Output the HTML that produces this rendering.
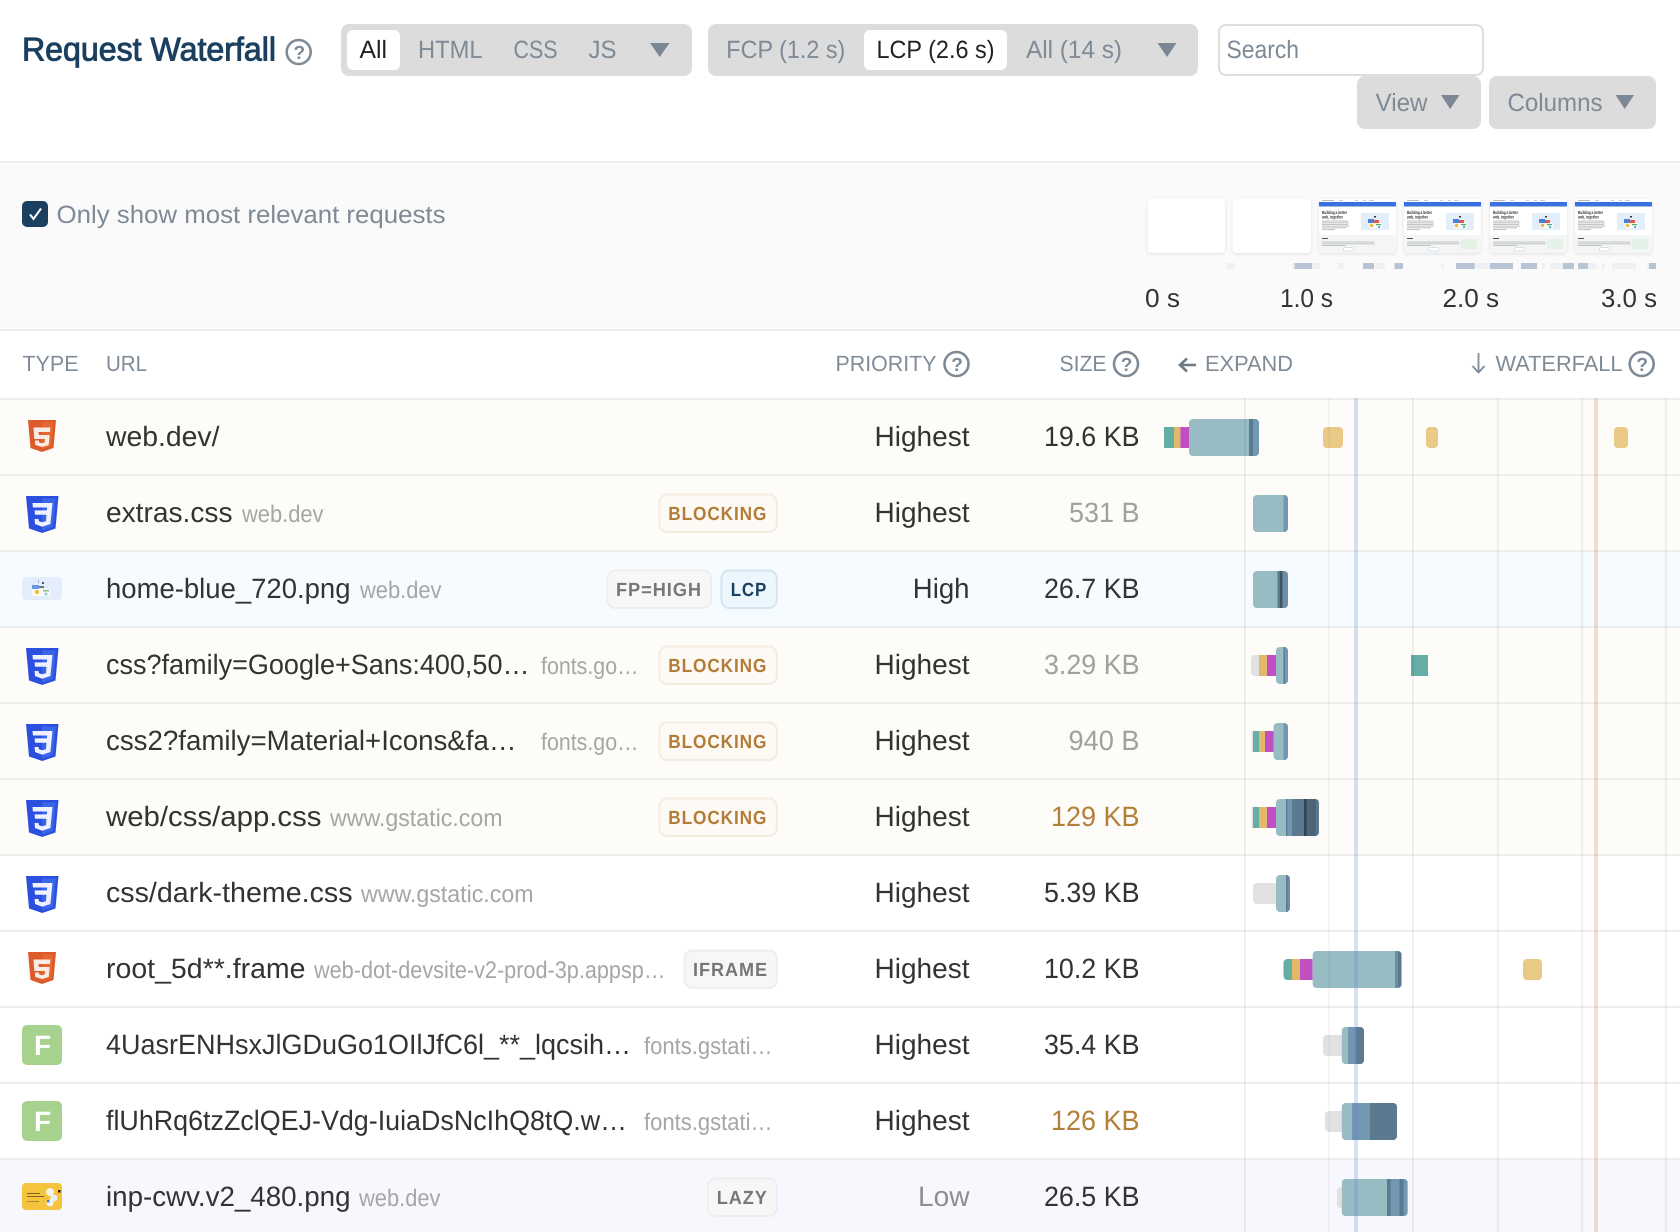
<!DOCTYPE html>
<html lang="en"><head><meta charset="utf-8"><title>Request Waterfall</title>
<style>
html,body{margin:0;padding:0;background:#fff;width:1680px;height:1232px;overflow:hidden}
svg{display:block;font-family:"Liberation Sans",sans-serif;text-rendering:geometricPrecision}
.t{font-size:28px;fill:#333}
.d{font-size:24px;fill:#a6a6a6}
.lt{fill:#a0a0a0}
.or{fill:#b3803a}
.g{font-size:25px;fill:#7e8a96}
.h{font-size:22px;fill:#7f8b97}
.b{font-size:19px;font-weight:700;letter-spacing:1px}
.help{fill:none;stroke:#7e8b97;stroke-width:2.6}
.q{font-size:19px;font-weight:700;fill:#7e8b97}
.tt{font-size:4.6px;font-weight:700;fill:#333}
</style></head><body>
<svg width="1680" height="1232" viewBox="0 0 1680 1232" xmlns="http://www.w3.org/2000/svg">
<defs>
<g id="film">
<rect width="77" height="54" rx="4" fill="#fff"/>
<rect x="3" y="1" width="12" height="1" fill="#bbb"/><rect x="20" y="1" width="4" height="1" fill="#ccc"/><rect x="36" y="1" width="3" height="1" fill="#ccc"/><rect x="44" y="1" width="3" height="1" fill="#ccc"/><rect x="50" y="1" width="5" height="1" fill="#ccc"/>
<rect y="3" width="77" height="4.500" fill="#3a6fe0"/>
<g fill="#c4c4c4"><rect x="3" y="21.500" width="26" height="1.100"/><rect x="3" y="23.200" width="27" height="1.100"/><rect x="3" y="24.900" width="26" height="1.100"/><rect x="3" y="26.600" width="27" height="1.100"/><rect x="3" y="28.300" width="24" height="1.100"/><rect x="3" y="30" width="13" height="1.100"/></g>
<rect x="42" y="14" width="28" height="17" fill="#e3eefb"/>
<rect x="49" y="20" width="6" height="4" fill="#4a7fe0"/><rect x="55" y="21" width="5" height="3" fill="#e05a4a"/><rect x="50" y="24" width="13" height="5.500" fill="#fbfbf6"/><circle cx="52.500" cy="26.500" r="1.700" fill="#f0b93a"/><rect x="57" y="25" width="5" height="1.200" fill="#4cb070"/><circle cx="60" cy="28" r="1.200" fill="#5ab0c8"/><rect x="55" y="17" width="2" height="1.500" fill="#333"/>
<path d="M0 36H77V50a4 4 0 0 1-4 4H4a4 4 0 0 1-4-4Z" fill="#f3f6f4"/>
<g fill="#c0c4c2"><rect x="3" y="42.500" width="52" height="1"/><rect x="3" y="44.300" width="53" height="1"/><rect x="3" y="46" width="24" height="1"/></g>
<rect x="3" y="39" width="6" height="1" fill="#555"/>
<rect x="24.500" y="48.500" width="10" height="3.500" rx="1.500" fill="#fff" stroke="#b6c9e4" stroke-width=".5"/>
</g>
<filter id="sh" x="-10%" y="-10%" width="120%" height="125%"><feDropShadow dx="0" dy="1" stdDeviation="1.500" flood-color="#000" flood-opacity=".1"/></filter>
<g id="css"><path d="M0 0H32.500L29.500 32.500L16.200 37L3 32.500Z" fill="#2b4fdf"/><path d="M16.200 2.500H29.600L27 31L16.200 34.500Z" fill="#3b65ea"/><path d="M6.500 7H26.500L24.400 28L16.200 30.700L9 28L8.600 23H12.600L12.900 25.300L16.200 26.300L20 25.300L20.500 18.800H9L8.600 14.400H20.900L21.200 11.500H6.900Z" fill="#eef1fc"/></g>
<g id="htm"><path d="M0 0H28L25.500 28L14 32L2.500 28Z" fill="#dd5a2b"/><path d="M14 2.500H25.200L23.200 26L14 29Z" fill="#e8682f"/><path d="M5.500 7.500H22.500L22 12H10.500L10.800 15H21.700L20.700 25L14 27L7.300 25L6.900 20.500H11L11.200 22.500L14 23.300L16.800 22.500L17.100 19H6.300Z" fill="#f8ece6"/></g>
<clipPath id="c0"><rect x="1189" y="419" width="70" height="37" rx="4"/></clipPath>
<clipPath id="c1"><rect x="1253" y="495" width="35" height="37" rx="4"/></clipPath>
<clipPath id="c2"><rect x="1253" y="571" width="35" height="37" rx="4"/></clipPath>
<clipPath id="c3"><rect x="1276" y="647" width="12" height="37" rx="4"/></clipPath>
<clipPath id="c4"><rect x="1273.500" y="723" width="14.500" height="37" rx="4"/></clipPath>
<clipPath id="c5"><rect x="1276" y="799" width="43" height="37" rx="4"/></clipPath>
<clipPath id="c6"><rect x="1276" y="875" width="14" height="37" rx="4"/></clipPath>
<clipPath id="c7"><rect x="1312.600" y="951" width="89" height="37" rx="4"/></clipPath>
<clipPath id="c8"><rect x="1341.700" y="1027" width="22.300" height="37" rx="4"/></clipPath>
<clipPath id="c9"><rect x="1341.700" y="1103" width="55.300" height="37" rx="4"/></clipPath>
<clipPath id="c10"><rect x="1341.700" y="1179" width="66" height="37" rx="4"/></clipPath>
</defs>

<rect width="1680" height="1232" fill="#fff"/>

<!-- Header -->
<text x="22" y="60.500" font-size="33" fill="#1b3f5f" stroke="#1b3f5f" stroke-width=".95" textLength="254" lengthAdjust="spacingAndGlyphs">Request Waterfall</text>
<circle class="help" cx="298.700" cy="52" r="12"/><text class="q" x="293.500" y="59">?</text>

<rect x="341" y="24" width="351" height="52" rx="8" fill="#dcdcdc"/>
<rect x="347" y="30" width="53" height="40" rx="6" fill="#fff"/>
<text x="359.500" y="58" font-size="25" fill="#222" textLength="27.500" lengthAdjust="spacingAndGlyphs">All</text>
<text class="g" x="418" y="58" textLength="64.500" lengthAdjust="spacingAndGlyphs">HTML</text>
<text class="g" x="513.500" y="58" textLength="44" lengthAdjust="spacingAndGlyphs">CSS</text>
<text class="g" x="588.500" y="58" textLength="28" lengthAdjust="spacingAndGlyphs">JS</text>
<path d="M650 43H669.500L659.700 57Z" fill="#7b8894"/>

<rect x="708" y="24" width="490" height="52" rx="8" fill="#dcdcdc"/>
<rect x="864" y="30" width="143" height="40" rx="6" fill="#fff"/>
<text class="g" x="726.300" y="58" textLength="119" lengthAdjust="spacingAndGlyphs">FCP (1.2 s)</text>
<text x="876.500" y="58" font-size="25" fill="#222" textLength="118" lengthAdjust="spacingAndGlyphs">LCP (2.6 s)</text>
<text class="g" x="1026" y="58" textLength="96" lengthAdjust="spacingAndGlyphs">All (14 s)</text>
<path d="M1157.500 43H1176.500L1167 57Z" fill="#7b8894"/>

<rect x="1219" y="25" width="264" height="50" rx="7" fill="#fff" stroke="#dedede" stroke-width="2"/>
<text class="g" x="1226.500" y="58" textLength="72.500" lengthAdjust="spacingAndGlyphs">Search</text>

<rect x="1357" y="76" width="124" height="53" rx="8" fill="#dcdcdc"/>
<text class="g" x="1375.500" y="111" textLength="52" lengthAdjust="spacingAndGlyphs">View</text>
<path d="M1441 95H1459.500L1450.200 109Z" fill="#7b8894"/>
<rect x="1489" y="76" width="167" height="53" rx="8" fill="#dcdcdc"/>
<text class="g" x="1507.500" y="111" textLength="95" lengthAdjust="spacingAndGlyphs">Columns</text>
<path d="M1615.500 95H1634L1624.700 109Z" fill="#7b8894"/>

<!-- Band -->
<rect y="161" width="1680" height="170" fill="#fafafa"/>
<rect y="161" width="1680" height="2" fill="#eeeeee"/>
<rect y="329" width="1680" height="2" fill="#eeeeee"/>
<rect x="22" y="201" width="26" height="26" rx="5" fill="#1b3f5f"/>
<path d="M30 214.500L33.500 219L41 208.500" fill="none" stroke="#fff" stroke-width="2"/>
<text class="g" x="56.500" y="223" textLength="389" lengthAdjust="spacingAndGlyphs">Only show most relevant requests</text>

<!-- Filmstrip -->
<rect x="1147.500" y="198.500" width="77.500" height="54.500" rx="4" fill="#fff" filter="url(#sh)"/>
<rect x="1232.500" y="198.500" width="78.500" height="54.500" rx="4" fill="#fff" filter="url(#sh)"/>
<g transform="translate(1319 199)" filter="url(#sh)"><use href="#film"/><text class="tt" x="3" y="15" textLength="25" lengthAdjust="spacingAndGlyphs">Building a better</text><text class="tt" x="3" y="19.500" textLength="21" lengthAdjust="spacingAndGlyphs">web, together</text></g>
<g transform="translate(1404 199)" filter="url(#sh)"><use href="#film"/><text class="tt" x="3" y="15" textLength="25" lengthAdjust="spacingAndGlyphs">Building a better</text><text class="tt" x="3" y="19.500" textLength="21" lengthAdjust="spacingAndGlyphs">web, together</text><rect x="57" y="40" width="16" height="10" rx="1" fill="#e3f1e6"/></g>
<g transform="translate(1490 199)" filter="url(#sh)"><use href="#film"/><text class="tt" x="3" y="15" textLength="25" lengthAdjust="spacingAndGlyphs">Building a better</text><text class="tt" x="3" y="19.500" textLength="21" lengthAdjust="spacingAndGlyphs">web, together</text><rect x="57" y="40" width="16" height="10" rx="1" fill="#e3f1e6"/></g>
<g transform="translate(1575 199)" filter="url(#sh)"><use href="#film"/><text class="tt" x="3" y="15" textLength="25" lengthAdjust="spacingAndGlyphs">Building a better</text><text class="tt" x="3" y="19.500" textLength="21" lengthAdjust="spacingAndGlyphs">web, together</text><rect x="57" y="40" width="16" height="10" rx="1" fill="#e3f1e6"/></g>

<g fill="#eef0f2">
<rect x="1226.500" y="263" width="8.500" height="6"/><rect x="1292" y="263" width="28.500" height="6"/><rect x="1338" y="263" width="5.600" height="6"/><rect x="1375" y="263" width="10" height="6"/><rect x="1441.500" y="263" width="2" height="6"/><rect x="1474.500" y="263" width="16" height="6"/><rect x="1542" y="263" width="3" height="6"/><rect x="1550" y="263" width="13" height="6"/><rect x="1588" y="263" width="8.500" height="6"/><rect x="1602" y="263" width="2.600" height="6"/><rect x="1612" y="263" width="24" height="6"/><rect x="1647" y="263" width="2" height="6"/>
</g>
<g fill="#b6c4d4">
<rect x="1294.500" y="263" width="17.500" height="6"/><rect x="1363" y="263" width="11" height="6"/><rect x="1394.500" y="263" width="8.500" height="6"/><rect x="1456" y="263" width="18.500" height="6"/><rect x="1490" y="263" width="23" height="6"/><rect x="1521" y="263" width="16" height="6"/><rect x="1563" y="263" width="11" height="6"/><rect x="1578" y="263" width="10" height="6"/><rect x="1649" y="263" width="7" height="6"/>
</g>
<g font-size="26" fill="#333">
<text x="1145" y="307" textLength="35" lengthAdjust="spacingAndGlyphs">0 s</text>
<text x="1280" y="307" textLength="53" lengthAdjust="spacingAndGlyphs">1.0 s</text>
<text x="1442.500" y="307" textLength="56.500" lengthAdjust="spacingAndGlyphs">2.0 s</text>
<text x="1601" y="307" textLength="56" lengthAdjust="spacingAndGlyphs">3.0 s</text>
</g>

<!-- Table head -->
<text class="h" x="22.500" y="371" textLength="56" lengthAdjust="spacingAndGlyphs">TYPE</text>
<text class="h" x="106" y="371" textLength="41" lengthAdjust="spacingAndGlyphs">URL</text>
<text class="h" x="835.500" y="371" textLength="101" lengthAdjust="spacingAndGlyphs">PRIORITY</text>
<circle class="help" cx="956.500" cy="364" r="12"/><text class="q" x="951.200" y="371">?</text>
<text class="h" x="1059.500" y="371" textLength="47" lengthAdjust="spacingAndGlyphs">SIZE</text>
<circle class="help" cx="1126" cy="364" r="12"/><text class="q" x="1120.700" y="371">?</text>
<path d="M1196 365H1180M1187 358.500L1180 365L1187 371.500" fill="none" stroke="#6f7a85" stroke-width="2.600"/>
<text class="h" x="1205" y="371" textLength="88" lengthAdjust="spacingAndGlyphs">EXPAND</text>
<path d="M1478.500 353V372M1472.500 366L1478.500 372.500L1484.500 366" fill="none" stroke="#7f8b97" stroke-width="1.800"/>
<text class="h" x="1495.500" y="371" textLength="127" lengthAdjust="spacingAndGlyphs">WATERFALL</text>
<circle class="help" cx="1641.700" cy="364" r="12"/><text class="q" x="1636.400" y="371">?</text>

<!-- Row backgrounds -->
<rect y="398" width="1680" height="228" fill="#fdfcf8"/>
<rect y="552" width="1680" height="74" fill="#f6fbff"/>
<rect y="626" width="1680" height="229" fill="#fdfcf8"/>
<rect y="1160" width="1680" height="72" fill="#f6f8fe"/>
<g fill="#eeeeee">
<rect y="398" width="1680" height="2"/><rect y="474" width="1680" height="2"/><rect y="550" width="1680" height="2"/><rect y="626" width="1680" height="2"/><rect y="702" width="1680" height="2"/><rect y="778" width="1680" height="2"/><rect y="854" width="1680" height="2"/><rect y="930" width="1680" height="2"/><rect y="1006" width="1680" height="2"/><rect y="1082" width="1680" height="2"/><rect y="1158" width="1680" height="2"/>
</g>

<!-- Type icons -->
<use href="#htm" x="28" y="420"/>
<use href="#css" x="26" y="496"/>
<g transform="translate(22 577)"><rect width="40" height="23" rx="4" fill="#e4edfb"/><rect x="10" y="8" width="7" height="4" fill="#4a7fe0" fill-opacity=".8"/><rect x="17" y="9" width="5" height="2" fill="#777"/><rect x="10" y="12" width="18" height="7" fill="#fbfbf6"/><circle cx="15" cy="15" r="2" fill="#f0b93a"/><rect x="21" y="13" width="6" height="1.500" fill="#7cc090"/><circle cx="24" cy="17" r="1.500" fill="#8ac8d8"/><rect x="16" y="3" width="1" height="3" fill="#9fb0e0"/><rect x="20" y="5" width="2" height="2" fill="#555"/></g>
<use href="#css" x="26" y="648"/>
<use href="#css" x="26" y="724"/>
<use href="#css" x="26" y="800"/>
<use href="#css" x="26" y="876"/>
<use href="#htm" x="28" y="952"/>
<rect x="22" y="1025" width="40" height="40" rx="5" fill="#a6d28e"/><text x="34" y="1055" font-size="28" font-weight="700" fill="#fff">F</text>
<rect x="22" y="1101" width="40" height="40" rx="5" fill="#a6d28e"/><text x="34" y="1131" font-size="28" font-weight="700" fill="#fff">F</text>
<g transform="translate(22 1183)"><rect width="40" height="27" rx="4" fill="#f6c33c"/><rect x="5" y="10" width="13" height="1" fill="#7a6420"/><rect x="5" y="13" width="17" height="1" fill="#7a6420"/><rect x="5" y="18" width="12" height=".8" fill="#9a8030"/><circle cx="28" cy="9" r="4" fill="#f4f2ea"/><circle cx="32" cy="15" r="3.500" fill="#e6eef8"/><circle cx="28" cy="20" r="3.500" fill="#f4f2ea"/><rect x="36" y="7" width="2.500" height="2.500" fill="#222"/><rect x="25" y="17" width="2.500" height="2.500" fill="#4a7fe0"/></g>

<!-- URLs -->
<text class="t" x="106" y="446" textLength="113.500" lengthAdjust="spacingAndGlyphs">web.dev/</text>

<text class="t" x="106" y="522" textLength="126.500" lengthAdjust="spacingAndGlyphs">extras.css</text>
<text class="d" x="242" y="522" textLength="81.500" lengthAdjust="spacingAndGlyphs">web.dev</text>

<text class="t" x="106" y="598" textLength="244.500" lengthAdjust="spacingAndGlyphs">home-blue_720.png</text>
<text class="d" x="360" y="598" textLength="81.500" lengthAdjust="spacingAndGlyphs">web.dev</text>

<text class="t" x="106" y="674" textLength="423.500" lengthAdjust="spacingAndGlyphs">css?family=Google+Sans:400,50…</text>
<text class="d" x="541" y="674" textLength="97.500" lengthAdjust="spacingAndGlyphs">fonts.go…</text>

<text class="t" x="106" y="750" textLength="410.500" lengthAdjust="spacingAndGlyphs">css2?family=Material+Icons&amp;fa…</text>
<text class="d" x="541" y="750" textLength="97.500" lengthAdjust="spacingAndGlyphs">fonts.go…</text>

<text class="t" x="106" y="826" textLength="215.500" lengthAdjust="spacingAndGlyphs">web/css/app.css</text>
<text class="d" x="330" y="826" textLength="172.500" lengthAdjust="spacingAndGlyphs">www.gstatic.com</text>

<text class="t" x="106" y="902" textLength="246.500" lengthAdjust="spacingAndGlyphs">css/dark-theme.css</text>
<text class="d" x="361" y="902" textLength="172.500" lengthAdjust="spacingAndGlyphs">www.gstatic.com</text>

<text class="t" x="106" y="978" textLength="199.500" lengthAdjust="spacingAndGlyphs">root_5d**.frame</text>
<text class="d" x="314" y="978" textLength="351.500" lengthAdjust="spacingAndGlyphs">web-dot-devsite-v2-prod-3p.appsp…</text>

<text class="t" x="106" y="1054" textLength="525" lengthAdjust="spacingAndGlyphs">4UasrENHsxJlGDuGo1OIlJfC6l_**_lqcsih…</text>
<text class="d" x="644" y="1054" textLength="128.500" lengthAdjust="spacingAndGlyphs">fonts.gstati…</text>

<text class="t" x="106" y="1130" textLength="521" lengthAdjust="spacingAndGlyphs">flUhRq6tzZclQEJ-Vdg-IuiaDsNcIhQ8tQ.w…</text>
<text class="d" x="644" y="1130" textLength="128.500" lengthAdjust="spacingAndGlyphs">fonts.gstati…</text>

<text class="t" x="106" y="1206" textLength="244.500" lengthAdjust="spacingAndGlyphs">inp-cwv.v2_480.png</text>
<text class="d" x="359" y="1206" textLength="81.500" lengthAdjust="spacingAndGlyphs">web.dev</text>

<!-- Badges -->
<g stroke-width="2">
<rect x="659.400" y="494.500" width="117.400" height="37.500" rx="8" fill="#fdf9f4" stroke="#f5ebdf"/>
<rect x="607.300" y="570.500" width="103.700" height="37.500" rx="8" fill="#f7f7f7" stroke="#eeeeee"/>
<rect x="721.400" y="570.500" width="55.400" height="37.500" rx="8" fill="#ecf6fd" stroke="#d5e5f0"/>
<rect x="659.400" y="646.500" width="117.400" height="37.500" rx="8" fill="#fdf9f4" stroke="#f5ebdf"/>
<rect x="659.400" y="722.500" width="117.400" height="37.500" rx="8" fill="#fdf9f4" stroke="#f5ebdf"/>
<rect x="659.400" y="798.500" width="117.400" height="37.500" rx="8" fill="#fdf9f4" stroke="#f5ebdf"/>
<rect x="684.600" y="950.500" width="92.200" height="37.500" rx="8" fill="#f7f7f7" stroke="#eeeeee"/>
<rect x="708" y="1178.500" width="68.800" height="37.500" rx="8" fill="#f7f7f7" stroke="#eeeeee"/>
</g>
<g class="b">
<text x="668.300" y="520" fill="#b27c38" textLength="99" lengthAdjust="spacingAndGlyphs">BLOCKING</text>
<text x="616" y="596" fill="#777" textLength="86" lengthAdjust="spacingAndGlyphs">FP=HIGH</text>
<text x="730.700" y="596" fill="#1b3f5f" textLength="36.500" lengthAdjust="spacingAndGlyphs">LCP</text>
<text x="668.300" y="672" fill="#b27c38" textLength="99" lengthAdjust="spacingAndGlyphs">BLOCKING</text>
<text x="668.300" y="748" fill="#b27c38" textLength="99" lengthAdjust="spacingAndGlyphs">BLOCKING</text>
<text x="668.300" y="824" fill="#b27c38" textLength="99" lengthAdjust="spacingAndGlyphs">BLOCKING</text>
<text x="693" y="976" fill="#777" textLength="75" lengthAdjust="spacingAndGlyphs">IFRAME</text>
<text x="716.800" y="1204" fill="#777" textLength="51" lengthAdjust="spacingAndGlyphs">LAZY</text>
</g>

<!-- Priority -->
<text class="t" x="874.500" y="446" textLength="95" lengthAdjust="spacingAndGlyphs">Highest</text>
<text class="t" x="874.500" y="522" textLength="95" lengthAdjust="spacingAndGlyphs">Highest</text>
<text class="t" x="912.800" y="598" textLength="56.700" lengthAdjust="spacingAndGlyphs">High</text>
<text class="t" x="874.500" y="674" textLength="95" lengthAdjust="spacingAndGlyphs">Highest</text>
<text class="t" x="874.500" y="750" textLength="95" lengthAdjust="spacingAndGlyphs">Highest</text>
<text class="t" x="874.500" y="826" textLength="95" lengthAdjust="spacingAndGlyphs">Highest</text>
<text class="t" x="874.500" y="902" textLength="95" lengthAdjust="spacingAndGlyphs">Highest</text>
<text class="t" x="874.500" y="978" textLength="95" lengthAdjust="spacingAndGlyphs">Highest</text>
<text class="t" x="874.500" y="1054" textLength="95" lengthAdjust="spacingAndGlyphs">Highest</text>
<text class="t" x="874.500" y="1130" textLength="95" lengthAdjust="spacingAndGlyphs">Highest</text>
<text class="t lt" x="918" y="1206" textLength="51.500" lengthAdjust="spacingAndGlyphs" style="fill:#8e8e8e">Low</text>

<!-- Size -->
<text class="t" x="1044" y="446" textLength="95.500" lengthAdjust="spacingAndGlyphs">19.6 KB</text>
<text class="t lt" x="1069" y="522" textLength="70.500" lengthAdjust="spacingAndGlyphs">531 B</text>
<text class="t" x="1044" y="598" textLength="95.500" lengthAdjust="spacingAndGlyphs">26.7 KB</text>
<text class="t lt" x="1044" y="674" textLength="95.500" lengthAdjust="spacingAndGlyphs">3.29 KB</text>
<text class="t lt" x="1068.500" y="750" textLength="71" lengthAdjust="spacingAndGlyphs">940 B</text>
<text class="t or" x="1051" y="826" textLength="88.500" lengthAdjust="spacingAndGlyphs">129 KB</text>
<text class="t" x="1044" y="902" textLength="95.500" lengthAdjust="spacingAndGlyphs">5.39 KB</text>
<text class="t" x="1044" y="978" textLength="95.500" lengthAdjust="spacingAndGlyphs">10.2 KB</text>
<text class="t" x="1044" y="1054" textLength="95.500" lengthAdjust="spacingAndGlyphs">35.4 KB</text>
<text class="t or" x="1051" y="1130" textLength="88.500" lengthAdjust="spacingAndGlyphs">126 KB</text>
<text class="t" x="1044" y="1206" textLength="95.500" lengthAdjust="spacingAndGlyphs">26.5 KB</text>

<!-- Bars -->
<!-- row 0 -->
<rect x="1164" y="427" width="10" height="21" fill="#65aea5"/><rect x="1174" y="427" width="6.400" height="21" fill="#e2b96b"/><rect x="1180.400" y="427" width="9" height="21" fill="#c050c2"/>
<g clip-path="url(#c0)"><rect x="1189" y="419" width="70" height="37" fill="#97bcc3"/><rect x="1249" y="419" width="4" height="37" fill="#5c7a8f"/><rect x="1253" y="419" width="6" height="37" fill="#7297b0"/></g>
<rect x="1323" y="427" width="20" height="21" rx="4" fill="#e9c986"/><rect x="1426" y="427" width="12" height="21" rx="4" fill="#e9c986"/><rect x="1614" y="427" width="14" height="21" rx="4" fill="#e9c986"/>
<!-- row 1 -->
<g clip-path="url(#c1)"><rect x="1253" y="495" width="35" height="37" fill="#97bcc3"/><rect x="1283.500" y="495" width="4.500" height="37" fill="#7297b0"/></g>
<!-- row 2 -->
<g clip-path="url(#c2)"><rect x="1253" y="571" width="35" height="37" fill="#97bcc3"/><rect x="1277.500" y="571" width="2.500" height="37" fill="#5c7a8f"/><rect x="1280" y="571" width="2.500" height="37" fill="#3f5565"/><rect x="1282.500" y="571" width="5.500" height="37" fill="#6c8ea8"/></g>
<!-- row 3 -->
<path d="M1255 655H1259V676H1255a4 4 0 0 1-4-4V659a4 4 0 0 1 4-4Z" fill="#e1e1e1"/><rect x="1259" y="655" width="8" height="21" fill="#e2b96b"/><rect x="1267" y="655" width="9" height="21" fill="#c050c2"/>
<g clip-path="url(#c3)"><rect x="1276" y="647" width="12" height="37" fill="#97bcc3"/><rect x="1283.500" y="647" width="1.700" height="37" fill="#5c7a8f"/><rect x="1285.200" y="647" width="2.800" height="37" fill="#7297b0"/></g>
<rect x="1411" y="655" width="17" height="21" fill="#65aea5"/>
<!-- row 4 -->
<rect x="1251.500" y="731" width="2" height="21" fill="#e1e1e1"/><rect x="1253" y="731" width="6" height="21" fill="#65aea5"/><rect x="1259" y="731" width="6" height="21" fill="#e2b96b"/><rect x="1265" y="731" width="8.500" height="21" fill="#c050c2"/>
<g clip-path="url(#c4)"><rect x="1273.500" y="723" width="14.500" height="37" fill="#97bcc3"/><rect x="1283.500" y="723" width="4.500" height="37" fill="#7297b0"/></g>
<!-- row 5 -->
<rect x="1251.500" y="807" width="2" height="21" fill="#e1e1e1"/><rect x="1253" y="807" width="6" height="21" fill="#65aea5"/><rect x="1259" y="807" width="8" height="21" fill="#e2b96b"/><rect x="1267" y="807" width="9" height="21" fill="#c050c2"/>
<g clip-path="url(#c5)"><rect x="1276" y="799" width="43" height="37" fill="#97bcc3"/><rect x="1286" y="799" width="6" height="37" fill="#7297b0"/><rect x="1286" y="799" width="1.300" height="37" fill="#5c7a8f"/><rect x="1292" y="799" width="12" height="37" fill="#5c7a8f"/><rect x="1304" y="799" width="2.500" height="37" fill="#2f4352"/><rect x="1306.500" y="799" width="9.500" height="37" fill="#4c6578"/><rect x="1316" y="799" width="3" height="37" fill="#5c7a8f"/></g>
<!-- row 6 -->
<path d="M1257 883H1276V904H1257a4 4 0 0 1-4-4V887a4 4 0 0 1 4-4Z" fill="#e1e1e1"/>
<g clip-path="url(#c6)"><rect x="1276" y="875" width="14" height="37" fill="#97bcc3"/><rect x="1286" y="875" width="1.500" height="37" fill="#5c7a8f"/><rect x="1287.500" y="875" width="2.500" height="37" fill="#6c8ea8"/></g>
<!-- row 7 -->
<path d="M1287.500 959H1292V980H1287.500a4 4 0 0 1-4-4V963a4 4 0 0 1 4-4Z" fill="#65aea5"/><rect x="1292" y="959" width="8" height="21" fill="#e2b96b"/><rect x="1300" y="959" width="12.600" height="21" fill="#c050c2"/>
<g clip-path="url(#c7)"><rect x="1312.600" y="951" width="89" height="37" fill="#97bcc3"/><rect x="1395" y="951" width="3" height="37" fill="#6c8ea8"/><rect x="1398" y="951" width="3.600" height="37" fill="#5c7a8f"/></g>
<rect x="1523" y="959" width="19" height="21" rx="4" fill="#e9c986"/>
<!-- row 8 -->
<path d="M1327 1035H1342V1056H1327a4 4 0 0 1-4-4V1039a4 4 0 0 1 4-4Z" fill="#e1e1e1"/>
<g clip-path="url(#c8)"><rect x="1341.700" y="1027" width="22.300" height="37" fill="#97bcc3"/><rect x="1348" y="1027" width="7.500" height="37" fill="#7297b0"/><rect x="1355.500" y="1027" width="8.500" height="37" fill="#5c7a8f"/></g>
<!-- row 9 -->
<path d="M1329 1111H1342V1132H1329a4 4 0 0 1-4-4V1115a4 4 0 0 1 4-4Z" fill="#e1e1e1"/>
<g clip-path="url(#c9)"><rect x="1341.700" y="1103" width="55.300" height="37" fill="#97bcc3"/><rect x="1352" y="1103" width="18" height="37" fill="#7297b0"/><rect x="1370" y="1103" width="27" height="37" fill="#5c7a8f"/></g>
<!-- row 10 -->
<path d="M1341 1187H1342V1208H1341a4 4 0 0 1-4-4V1191a4 4 0 0 1 4-4Z" fill="#e1e1e1"/>
<g clip-path="url(#c10)"><rect x="1341.700" y="1179" width="66" height="37" fill="#97bcc3"/><rect x="1387" y="1179" width="20.700" height="37" fill="#7297b0"/><rect x="1387" y="1179" width="3.600" height="37" fill="#5c7a8f"/><rect x="1399.500" y="1179" width="4" height="37" fill="#5c7a8f"/></g>

<!-- Grid lines -->
<g fill="#000" fill-opacity=".055">
<rect x="1244" y="398" width="2" height="834"/><rect x="1412" y="398" width="2" height="834"/><rect x="1497" y="398" width="2" height="834"/><rect x="1581" y="398" width="2" height="834"/><rect x="1665" y="398" width="2" height="834"/>
</g>
<rect x="1328" y="398" width="2" height="834" fill="#000" fill-opacity=".035"/>
<rect x="1354.200" y="398" width="3.700" height="834" fill="#5f86dc" fill-opacity=".27"/>
<rect x="1594.200" y="398" width="3.700" height="834" fill="#dc7a5a" fill-opacity=".27"/>
</svg>
</body></html>
